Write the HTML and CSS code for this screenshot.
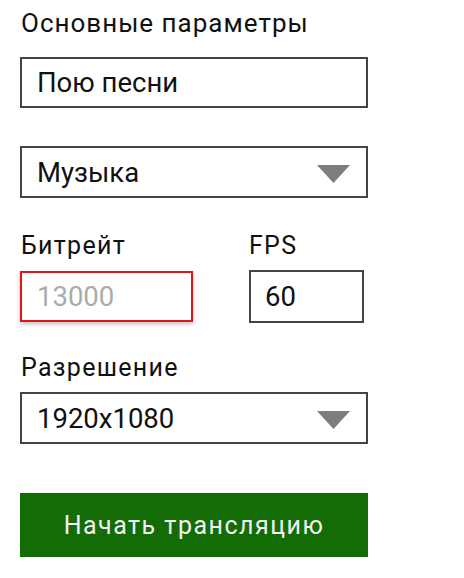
FILE: index.html
```html
<!DOCTYPE html>
<html lang="ru">
<head>
<meta charset="utf-8">
<title>Основные параметры</title>
<link rel="stylesheet" href="styles.css">
</head>
<body>
<main class="form">
  <h1 class="title">Основные параметры</h1>
  <div class="field text-field">Пою песни</div>
  <div class="field select-field">
    <span>Музыка</span>
    <svg class="arrow" width="33" height="18" viewBox="0 0 33 18"><polygon points="0,0 33,0 16.5,18" fill="#7d7d7d"/></svg>
  </div>
  <div class="row">
    <div class="col col-bitrate">
      <label class="label">Битрейт</label>
      <div class="field small-field error">13000</div>
    </div>
    <div class="col col-fps">
      <label class="label">FPS</label>
      <div class="field small-field fps">60</div>
    </div>
  </div>
  <label class="label label-res">Разрешение</label>
  <div class="field select-field res">
    <span>1920x1080</span>
    <svg class="arrow" width="33" height="18" viewBox="0 0 33 18"><polygon points="0,0 33,0 16.5,18" fill="#7d7d7d"/></svg>
  </div>
  <button class="start">Начать трансляцию</button>
</main>
</body>
</html>
```

FILE: styles.css
```css
html, body {
  margin: 0;
  padding: 0;
  background: #ffffff;
}
body {
  font-family: Roboto, "Noto Sans", sans-serif;
  color: #111;
}
.form {
  display: flex;
  flex-direction: column;
  width: 348px;
  padding: 9px 0 0 20px;
}
.title {
  margin: 0;
  font-size: 26px;
  font-weight: 400;
  line-height: 28px;
  letter-spacing: 1px;
  padding-left: 1px;
}
.field {
  box-sizing: border-box;
  border: 2px solid #444;
  display: flex;
  align-items: center;
  font-size: 27.5px;
  color: #111;
  padding-left: 15px;
}
.text-field {
  margin-top: 20px;
  height: 51px;
}
.select-field {
  margin-top: 38px;
  height: 52px;
  justify-content: space-between;
  padding-right: 16px;
}
.select-field.res {
  margin-top: 10px;
}
.arrow {
  display: block;
  margin-top: 3px;
}
.row {
  display: flex;
  margin-top: 34px;
}
.col {
  display: flex;
  flex-direction: column;
}
.col-bitrate {
  width: 173px;
}
.col-fps {
  margin-left: 56px;
  width: 115px;
}
.col-fps .label {
  padding-left: 0;
}
.label {
  font-size: 25px;
  line-height: 28px;
  letter-spacing: 1.3px;
  padding-left: 1px;
  color: #111;
}
.small-field {
  margin-top: 11px;
  height: 51px;
}
.error {
  border-color: #e0141c;
  color: #ababab;
  box-shadow: 0 2px 4px rgba(0, 0, 0, 0.25);
}
.fps {
  padding-left: 14px;
  height: 53px;
  margin-top: 10px;
}
.label-res {
  margin-top: 31px;
}
.start {
  margin-top: 49px;
  height: 64px;
  border: none;
  background: #136c06;
  color: #f2f2f2;
  font-family: Roboto, "Noto Sans", sans-serif;
  font-size: 25px;
  letter-spacing: 1.5px;
  padding: 0;
}
```
